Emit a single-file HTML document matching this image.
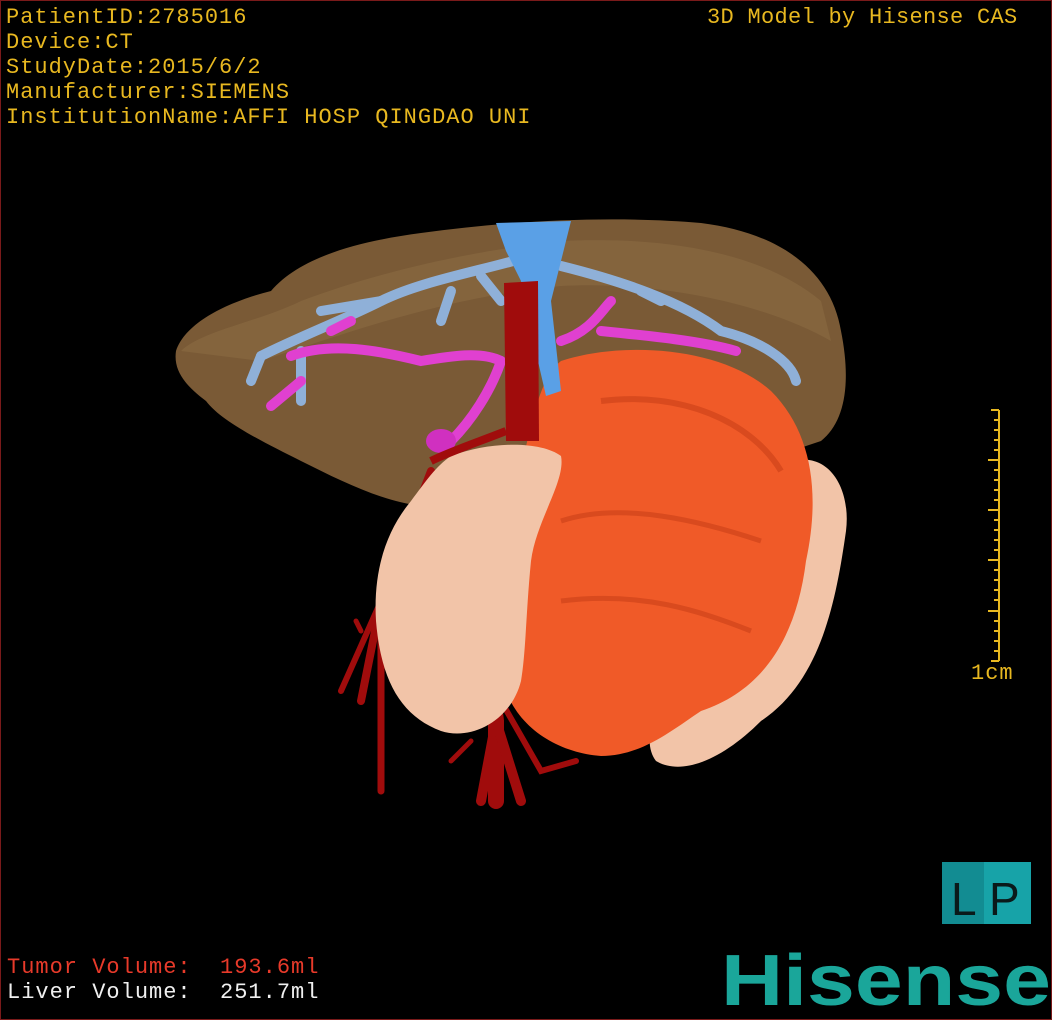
<!DOCTYPE html>
<html><head><meta charset="utf-8"><style>
html,body{margin:0;padding:0;background:#000;}
#c{position:relative;width:1050px;height:1018px;border:1px solid #7a1a1a;background:#000;overflow:hidden;}
.t{position:absolute;font-family:"Liberation Mono",monospace;font-size:22px;color:#e8b820;line-height:25px;white-space:pre;letter-spacing:1px;}
svg{position:absolute;left:0;top:0;}
</style></head><body><div id="c">
<svg width="1050" height="1018" viewBox="0 0 1050 1018">
<path d="M175 350 C185 320 230 300 270 290 C300 255 360 240 420 232 C520 218 620 215 700 222 C780 232 830 270 840 330 C850 380 845 420 820 440 L790 450 L560 470 L470 480 L420 505 C380 500 340 480 300 460 C260 440 220 420 205 400 C185 385 172 370 175 350Z" fill="#7a5a36"/>
<path d="M180 350 C200 330 260 320 300 300 C380 270 470 250 560 240 C660 235 760 250 820 300 L830 340 C760 300 650 280 560 285 C450 295 350 330 260 360 Z" fill="#8a6a42" opacity="0.6"/>
<g stroke="#a00c0c" fill="none" stroke-linecap="round">
<path d="M500 470 L480 600 L495 720 L495 800" stroke-width="16"/>
<path d="M495 720 L480 800" stroke-width="10"/>
<path d="M495 720 L520 800" stroke-width="10"/>
<path d="M430 470 L380 600 L360 700" stroke-width="8"/>
<path d="M380 600 L340 690" stroke-width="6"/>
<path d="M380 620 L380 790" stroke-width="7"/>
<path d="M500 700 L540 770 L575 760" stroke-width="6"/>
<path d="M470 740 L450 760" stroke-width="5"/>
<path d="M360 630 L355 620" stroke-width="5"/>
</g>
<path d="M790 460 C830 450 850 490 845 530 C835 600 820 680 760 720 C720 760 680 775 655 760 C640 740 650 700 700 660 C760 610 790 520 790 460Z" fill="#f2c4a8"/>
<path d="M560 360 C620 340 720 345 770 390 C810 430 820 490 805 560 C795 640 760 690 700 710 C670 730 640 755 600 755 C560 752 520 730 505 690 C495 620 505 530 520 470 C530 420 540 375 560 360Z" fill="#f05a28"/>
<path d="M600 400 C680 390 750 420 780 470" stroke="#d94a1e" stroke-width="6" fill="none"/>
<path d="M560 520 C620 500 700 520 760 540" stroke="#d94a1e" stroke-width="5" fill="none"/>
<path d="M560 600 C640 590 700 610 750 630" stroke="#d94a1e" stroke-width="5" fill="none"/>
<path d="M450 455 C490 440 540 440 560 455 C565 480 535 520 530 560 C525 610 525 650 520 680 C510 720 470 740 440 730 C400 715 380 680 375 620 C372 570 385 530 410 500 C425 480 435 465 450 455Z" fill="#f2c4a8"/>
<g stroke="#8fb0d8" fill="none" stroke-linecap="round" stroke-width="10">
<path d="M530 255 C480 270 420 280 380 300 C340 320 300 335 260 355"/>
<path d="M380 300 L320 310"/>
<path d="M260 355 L250 380"/>
<path d="M300 350 L300 400"/>
<path d="M560 265 C620 280 680 300 720 330 C760 340 790 360 795 380"/>
<path d="M640 290 L660 300"/>
<path d="M450 290 L440 320"/>
<path d="M480 275 L500 300"/>
</g>
<path d="M495 222 L570 220 L560 260 L550 300 L560 390 L545 395 L530 330 L520 280 L505 250Z" fill="#5aa0e6"/>
<g stroke="#e040d0" fill="none" stroke-linecap="round" stroke-width="10">
<path d="M290 355 C330 340 380 350 420 360 C450 355 480 350 500 360"/>
<path d="M500 360 C490 390 470 420 450 440"/>
<path d="M560 340 C590 330 600 310 610 300"/>
<path d="M600 330 C650 335 700 340 735 350"/>
<path d="M330 330 L350 320"/>
<path d="M270 405 L300 380"/>
</g>
<ellipse cx="440" cy="440" rx="15" ry="12" fill="#d030c0"/>
<path d="M503 282 L537 280 L538 440 L505 440Z" fill="#a00c0c"/>
<path d="M505 430 C480 440 450 450 430 460" stroke="#a00c0c" stroke-width="8" fill="none"/>
<g stroke="#e8b820" stroke-width="2">
<line x1="998" y1="409" x2="998" y2="660"/>
<line x1="990" y1="409" x2="998" y2="409"/>
<line x1="993" y1="419" x2="998" y2="419"/><line x1="993" y1="429" x2="998" y2="429"/><line x1="993" y1="439" x2="998" y2="439"/><line x1="993" y1="449" x2="998" y2="449"/>
<line x1="987" y1="459" x2="998" y2="459"/>
<line x1="993" y1="469" x2="998" y2="469"/><line x1="993" y1="479" x2="998" y2="479"/><line x1="993" y1="489" x2="998" y2="489"/><line x1="993" y1="499" x2="998" y2="499"/>
<line x1="987" y1="509" x2="998" y2="509"/>
<line x1="993" y1="519" x2="998" y2="519"/><line x1="993" y1="529" x2="998" y2="529"/><line x1="993" y1="539" x2="998" y2="539"/><line x1="993" y1="549" x2="998" y2="549"/>
<line x1="987" y1="559" x2="998" y2="559"/>
<line x1="993" y1="569" x2="998" y2="569"/><line x1="993" y1="579" x2="998" y2="579"/><line x1="993" y1="589" x2="998" y2="589"/><line x1="993" y1="599" x2="998" y2="599"/>
<line x1="987" y1="610" x2="998" y2="610"/>
<line x1="993" y1="620" x2="998" y2="620"/><line x1="993" y1="630" x2="998" y2="630"/><line x1="993" y1="640" x2="998" y2="640"/><line x1="993" y1="650" x2="998" y2="650"/>
<line x1="990" y1="660" x2="998" y2="660"/>
</g>
<rect x="941" y="861" width="89" height="62" fill="#17a3a8"/>
<rect x="941" y="861" width="42" height="62" fill="#128c92"/>
<text x="950" y="914" font-family="Liberation Sans,sans-serif" font-size="46" fill="#0a1a1a">L</text>
<text x="988" y="914" font-family="Liberation Sans,sans-serif" font-size="46" fill="#0a1a1a">P</text>
<text x="720" y="1004" font-family="Liberation Sans,sans-serif" font-size="72" font-weight="bold" fill="#1aa69a" textLength="330" lengthAdjust="spacingAndGlyphs">Hisense</text>
</svg>
<div class="t" style="left:5px;top:4px">PatientID:2785016
Device:CT
StudyDate:2015/6/2
Manufacturer:SIEMENS
InstitutionName:AFFI HOSP QINGDAO UNI</div>
<div class="t" style="left:706px;top:4px;letter-spacing:0.3px">3D Model by Hisense CAS</div>
<div class="t" style="left:970px;top:660px">1cm</div>
<div class="t" style="left:6px;top:954px;color:#e83a2a">Tumor Volume:  193.6ml</div>
<div class="t" style="left:6px;top:979px;color:#f0f0f0">Liver Volume:  251.7ml</div>
</div></body></html>
